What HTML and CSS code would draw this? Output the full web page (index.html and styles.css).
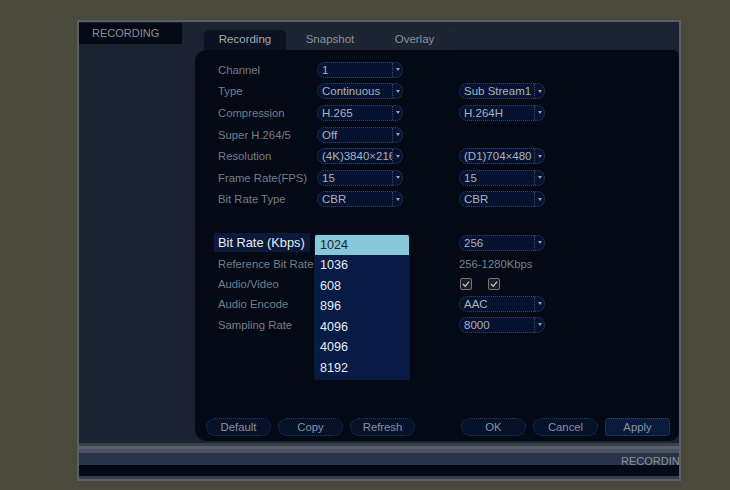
FILE: index.html
```html
<!DOCTYPE html>
<html>
<head>
<meta charset="utf-8">
<title>Recording</title>
<link rel="stylesheet" href="styles.css">
</head>
<body>
<div class="win">
  <div class="win-body">
    <aside class="side"><div class="side-tab">RECORDING</div></aside>
    <main class="main">
      <nav class="tabs">
        <div class="tab active">Recording</div>
        <div class="tab t2">Snapshot</div>
        <div class="tab t3">Overlay</div>
      </nav>
      <section class="panel">
        <div class="form">
          <div class="row"><span class="lbl">Channel</span><div class="sel c1"><span class="val">1</span><span class="arr"></span></div></div>
          <div class="row"><span class="lbl">Type</span><div class="sel c1"><span class="val">Continuous</span><span class="arr"></span></div><div class="sel c2"><span class="val">Sub Stream1</span><span class="arr"></span></div></div>
          <div class="row"><span class="lbl">Compression</span><div class="sel c1"><span class="val">H.265</span><span class="arr"></span></div><div class="sel c2"><span class="val">H.264H</span><span class="arr"></span></div></div>
          <div class="row"><span class="lbl">Super H.264/5</span><div class="sel c1"><span class="val">Off</span><span class="arr"></span></div></div>
          <div class="row"><span class="lbl">Resolution</span><div class="sel c1"><span class="val">(4K)3840×216</span><span class="arr"></span></div><div class="sel c2"><span class="val">(D1)704×480</span><span class="arr"></span></div></div>
          <div class="row"><span class="lbl">Frame Rate(FPS)</span><div class="sel c1"><span class="val">15</span><span class="arr"></span></div><div class="sel c2"><span class="val">15</span><span class="arr"></span></div></div>
          <div class="row"><span class="lbl">Bit Rate Type</span><div class="sel c1"><span class="val">CBR</span><span class="arr"></span></div><div class="sel c2"><span class="val">CBR</span><span class="arr"></span></div></div>
          <div class="row"></div>
          <div class="row"><span class="lbl hl">Bit Rate (Kbps)</span>
            <div class="sel c1"><span class="val"></span><span class="arr"></span>
              <ul class="list">
                <li class="on">1024</li>
                <li>1036</li>
                <li>608</li>
                <li>896</li>
                <li>4096</li>
                <li>4096</li>
                <li>8192</li>
              </ul>
            </div>
            <div class="sel c2"><span class="val">256</span><span class="arr"></span></div></div>
          <div class="row"><span class="lbl">Reference Bit Rate</span><span class="note c2">256-1280Kbps</span></div>
          <div class="row r-av"><span class="lbl">Audio/Video</span>
            <div class="checks c2">
              <span class="cb"><svg viewBox="0 0 10 10" width="10" height="10"><polyline points="2,5 4.2,7.3 8,2.6" fill="none" stroke="#c4c4bc" stroke-width="1.3"/></svg></span>
              <span class="cb"><svg viewBox="0 0 10 10" width="10" height="10"><polyline points="2,5 4.2,7.3 8,2.6" fill="none" stroke="#c4c4bc" stroke-width="1.3"/></svg></span>
            </div>
          </div>
          <div class="row r-ae"><span class="lbl">Audio Encode</span><div class="sel c2"><span class="val">AAC</span><span class="arr"></span></div></div>
          <div class="row r-sr"><span class="lbl">Sampling Rate</span><div class="sel c2"><span class="val">8000</span><span class="arr"></span></div></div>
        </div>
        <div class="btns">
          <button class="btn">Default</button>
          <button class="btn">Copy</button>
          <button class="btn">Refresh</button>
          <button class="btn gap">OK</button>
          <button class="btn">Cancel</button>
          <button class="btn apply">Apply</button>
        </div>
      </section>
    </main>
  </div>
  <div class="foot"><span>RECORDIN</span></div>
</div>
</body>
</html>
```

FILE: styles.css
```css
* { box-sizing: border-box; }
html, body { margin: 0; padding: 0; }
body {
  background: #4a4a3c;
  width: 730px;
  height: 490px;
  overflow: hidden;
  font-family: "Liberation Sans", Arial, sans-serif;
}
.win {
  margin: 20px 0 0 77px;
  width: 604px;
  height: 461px;
  border: 2px solid #5b5f68;
  background: #1b2230;
  display: flex;
  flex-direction: column;
}
.win-body {
  display: flex;
  height: 419px;
}
.side {
  width: 116px;
  flex: none;
}
.side-tab {
  margin-top: 1px;
  width: 103px;
  height: 21px;
  background: #040a15;
  color: #8a8e92;
  font-size: 11px;
  line-height: 20px;
  padding-left: 13px;
}
.main {
  flex: 1;
  padding-top: 8px;
  display: flex;
  flex-direction: column;
}
.tabs {
  margin-left: 9px;
  width: 251px;
  height: 20px;
  display: flex;
  background: #1d2432;
}
.tab {
  font-size: 11.5px;
  color: #8a929c;
  line-height: 19px;
  text-align: center;
}
.tab.active {
  width: 82px;
  background: #0b1220;
  border-radius: 5px 5px 0 0;
  color: #a2a9b2;
}
.tab.t2 { width: 88px; }
.tab.t3 { width: 81px; }
.panel {
  flex: 1;
  background: #030a16;
  border-radius: 12px 6px 9px 12px;
  display: flex;
  flex-direction: column;
}
.form {
  padding: 9px 0 0 23px;
}
.row {
  display: grid;
  grid-template-columns: 99px 86px 56px 86px;
  align-items: center;
  height: 21.6px;
}
.row.r-av { height: 19px; }
.row.r-ae { height: 20px; }
.row.r-sr { height: 21.5px; }
.lbl {
  grid-column: 1;
  font-size: 11.3px;
  color: #767d87;
  white-space: nowrap;
}
.lbl.hl {
  margin-left: -4px;
  padding-left: 4px;
  width: 96px;
  height: 19px;
  line-height: 19px;
  background: #0b1a3a;
  color: #e8eef4;
  font-size: 12.8px;
}
.c1 { grid-column: 2; }
.c2 { grid-column: 4; }
.sel {
  position: relative;
  height: 16px;
  border: 1px dotted #30426a;
  border-radius: 8px;
  background: #061330;
  display: flex;
  align-items: stretch;
}
.val {
  flex: 1;
  overflow: hidden;
  white-space: nowrap;
  padding-left: 4px;
  font-size: 11.5px;
  line-height: 14px;
  color: #a9b1bc;
}
.arr {
  width: 10px;
  flex: none;
  border-left: 1px dotted #3a4a6e;
  display: flex;
  align-items: center;
  justify-content: center;
}
.arr::after {
  content: "";
  border-left: 2.5px solid transparent;
  border-right: 2.5px solid transparent;
  border-top: 3px solid #9aa2ac;
}
.list {
  position: absolute;
  left: -4px;
  top: -2px;
  width: 96px;
  height: 146px;
  margin: 0;
  padding: 0;
  list-style: none;
  background: #071b45;
  border: 1px solid #0d1830;
  z-index: 5;
}
.list li {
  height: 20.5px;
  line-height: 20.5px;
  padding-left: 5px;
  font-size: 12.6px;
  color: #e6ecf4;
}
.list li.on {
  background: #88c9d9;
  color: #1a2232;
  border-radius: 2px 2px 0 0;
}
.note {
  font-size: 11.3px;
  color: #7a818b;
  white-space: nowrap;
}
.checks {
  display: flex;
  gap: 16px;
  padding-left: 1px;
}
.cb {
  width: 12px;
  height: 12px;
  border: 1px solid #7a786a;
  border-radius: 2px;
  background: #181e2a;
  display: flex;
  align-items: center;
  justify-content: center;
}
.btns {
  margin-top: auto;
  margin-bottom: 5px;
  padding-left: 11px;
  display: flex;
  gap: 7px;
  height: 18px;
}
.btn {
  width: 65px;
  height: 18px;
  padding: 0;
  border: 1px dotted #2c3c5e;
  border-radius: 9px;
  background: #06112a;
  color: #8a929e;
  font-family: "Liberation Sans", Arial, sans-serif;
  font-size: 11.3px;
  line-height: 16px;
}
.btn.gap { margin-left: 39px; }
.btn.apply {
  background: #0a1a3c;
  border-color: #34456a;
  border-radius: 4px;
}
.foot {
  flex: 1;
  background: linear-gradient(to bottom,
    #1b2230 0, #1b2230 2px,
    #3a414e 2px, #3a414e 5px,
    #5a5f68 5px, #5a5f68 8px,
    #4a5262 8px, #4a5262 12px,
    #2a3448 12px, #2a3448 24px,
    #040a16 24px, #040a16 35px,
    #343e50 35px);
  padding: 14px 0 0 542px;
  overflow: hidden;
  white-space: nowrap;
  color: #8a909a;
  font-size: 11px;
  line-height: 12px;
}
```
